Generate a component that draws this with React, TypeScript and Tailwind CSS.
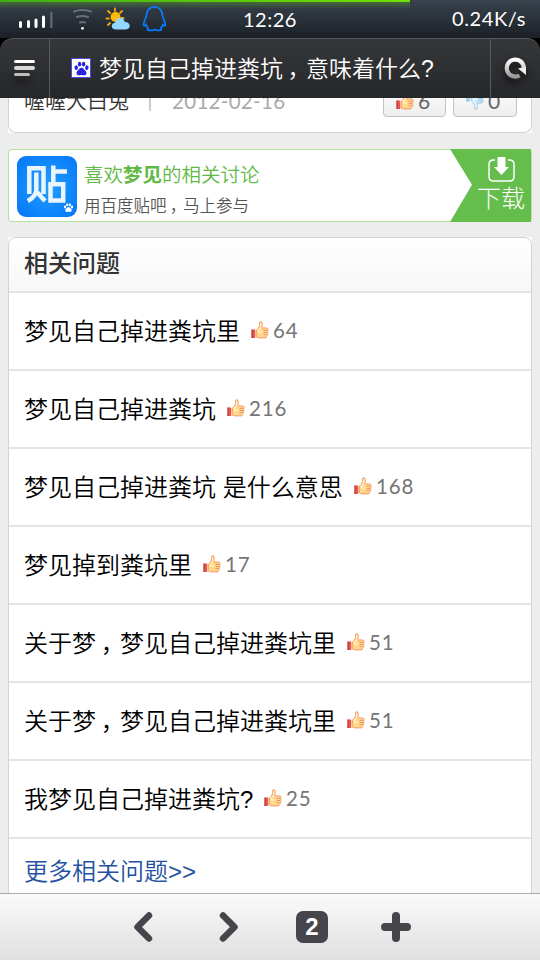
import React from 'react';

const questions = [
  { text: '梦见自己掉进粪坑里', votes: 64, width: 'w-[216px]' },
  { text: '梦见自己掉进粪坑', votes: 216, width: 'w-[192px]' },
  { text: '梦见自己掉进粪坑 是什么意思', votes: 168, width: 'w-[319px]' },
  { text: '梦见掉到粪坑里', votes: 17, width: 'w-[168px]' },
  { text: '关于梦，梦见自己掉进粪坑里', votes: 51, width: 'w-[312px]' },
  { text: '关于梦，梦见自己掉进粪坑里', votes: 51, width: 'w-[312px]' },
  { text: '我梦见自己掉进粪坑?', votes: 25, width: 'w-[229px]' },
];

// Sets full-width commas in the middle of their cell.
function Phrase({ text }: { text: string }) {
  return (
    <>
      {text.split('，').map((part, i) => (
        <React.Fragment key={i}>
          {i > 0 && <span className="inline-block translate-x-[.2em]">，</span>}
          {part}
        </React.Fragment>
      ))}
    </>
  );
}

function Thumb({ down = false }: { down?: boolean }) {
  const fill = down ? '#c9e6f7' : '#ffd98a';
  const edge = down ? '#8fc0e4' : '#f0865a';
  return (
    <svg width="18" height="18" viewBox="0 0 18 18" className={down ? 'shrink-0 -scale-y-100' : 'shrink-0'}>
      <path d="M.5 8.500h3.500v8.500H.5z" fill={down ? '#a9d3ee' : '#e2574f'} />
      <path d="M.5 8.500h1.200v8.500H.5z" fill={down ? '#8ebfe0' : '#c23a3a'} />
      <path d="M4 8.800h1.200v7.700H4z" fill={down ? '#e6f5fd' : '#ffc9ac'} />
      <path
        d="M5.300 9.200 7.500 7 8.600 4.500V1.700c.2-1.500 2-1.400 2.400.1.400 1.600.2 3.600-.4 5.100h5c1.700.1 1.800 1.700.9 2.300.9.600.8 1.700 0 2.200.7.700.5 1.800-.3 2.100.4.900 0 1.600-.7 1.900 0 1-.6 1.500-1.500 1.500H7.600L5.300 16z"
        fill={fill}
        stroke={edge}
        strokeWidth=".8"
      />
      <path d="M6.800 10 9.600 6.800V2.300M7 11h4" stroke={down ? '#edf9ff' : '#fff0c4'} strokeWidth="1.300" fill="none" />
      <path d="M12.500 9.300h3.500M12.700 11.500h3.300M12.500 13.600h3" stroke={edge} strokeWidth=".9" />
    </svg>
  );
}

function Paw({ className }: { className?: string }) {
  return (
    <svg viewBox="0 0 20 20" className={className} fill="currentColor">
      <ellipse cx="3.800" cy="9" rx="2" ry="2.700" transform="rotate(-12 3.800 9)" />
      <ellipse cx="7.700" cy="4.900" rx="2" ry="2.800" />
      <ellipse cx="12.500" cy="4.900" rx="2" ry="2.800" />
      <ellipse cx="16.300" cy="9" rx="2" ry="2.700" transform="rotate(12 16.300 9)" />
      <path d="M10 9c2 0 2.500 1.600 4 3 3 2.500 2 5.800-.6 6-1.400.1-2-.4-3.400-.4s-2 .5-3.400.4C4 17.800 3 14.500 6 12c1.500-1.400 2-3 4-3z" />
    </svg>
  );
}

function StatusBar() {
  return (
    <div className="relative flex h-[38px] shrink-0 items-center bg-linear-to-b from-[#39434d] to-[#1b2026] [font-family:Lato,sans-serif] text-[20px] text-white">
      <div className="absolute top-0 left-0 h-[9px] w-[410px] bg-linear-to-b from-[#55ab1c]/50 to-transparent" />
      <div className="absolute top-0 left-0 h-[2px] w-[410px] bg-linear-to-r from-[#3fae12] to-[#72df00]" />
      <svg className="absolute top-0 left-0" width="180" height="38" viewBox="0 0 180 38" fill="none">
        <path d="M20.500 22.500v4M28.500 21.500v5M36 20v6.500M43.500 17v9.500" stroke="#fff" strokeWidth="3" strokeLinecap="round" />
        <path d="M51.300 12v16" stroke="#5d646d" strokeWidth="2.500" />
        <g stroke="#68717a" strokeWidth="2" strokeLinecap="round">
          <path d="M74 11.500q8.500-3 17 0M77 17q5.500-2 11 0M80 22.500q2.500-1 5 0" />
        </g>
        <circle cx="82.500" cy="28.300" r="1.400" fill="#fff" />
        <g stroke="#f6a800" strokeWidth="1.800" strokeLinecap="round">
          <path d="M115 8.500v2.500M108 11l2 2M106.500 18.500h2.200M108 25l2-2M122 11l-2 2M121.500 18h2" />
        </g>
        <circle cx="115.500" cy="17" r="5" fill="#ffba0b" />
        <path d="M116 29.500c-5.500 0-5.500-6.500-.8-6.700 1-7 9-6.500 9.500-.7 6.500-.3 6.500 7.400 1.300 7.400z" fill="#91d9ff" />
        <path
          d="M154.500 6.800c-5 0-8 4-8 8.500 0 2.200-2.900 6-2.900 9.200 0 1.700 1 2 2.300.1.600 1.500 1.200 2.600 2.300 3.500-1.600 1.500-.7 2.200 1 2.200h3c1.600 0 1.500-1 2.300-1s.7 1 2.300 1h3c1.700 0 2.500-1 .9-2.200 1.200-1 1.800-2 2.300-3.500 1.300 1.900 2.300 1.600 2.300-.1 0-3.200-2.900-7-2.900-9.200 0-4.500-2.900-8.500-7.900-8.500z"
          stroke="#087cff"
          strokeWidth="1.700"
        />
      </svg>
      <span className="ml-[243px] w-[60px] leading-[38px] tracking-[.5px]">12:26</span>
      <span className="mr-[14px] ml-auto pb-[3px] tracking-[.6px]">0.24K/s</span>
    </div>
  );
}

function TitleBar() {
  return (
    <div className="h-[60px] shrink-0 bg-black">
      <div className="flex h-full rounded-t-[13px] border-t border-[#55565a] bg-linear-to-b from-[#363739] to-[#26272a] text-white">
        <div className="flex w-[50px] flex-col gap-[3px] border-r border-[#58595c] pt-[21px] pl-[14px]">
          <i className="h-[3px] w-[21px] rounded-full bg-white shadow-md" />
          <i className="h-[4px] w-[21px] rounded-full bg-[#d8d8d8] shadow-md" />
          <i className="h-[3px] w-[16px] rounded-full bg-[#bcbcbc] shadow-[0_6px_6px_#111]" />
        </div>
        <div className="flex w-[441px] items-center border-r border-[#58595c] pl-[21px]">
          <span className="-mt-px flex size-[20px] items-center justify-center border border-[#5149e5] bg-white text-[#2825d8]">
            <Paw className="size-[17px]" />
          </span>
          <span className="ml-[8px] text-[23px] leading-[30px] font-[350] whitespace-nowrap">
            <Phrase text="梦见自己掉进粪坑，意味着什么?" />
          </span>
        </div>
        <div className="flex flex-1 items-center pl-[13px]">
          <svg width="24" height="28" viewBox="0 0 24 28" fill="none" className="drop-shadow-[0_5px_3px_#111]">
            <defs>
              <linearGradient id="reload" x1="0" y1="0" x2="0" y2="1">
                <stop stopColor="#fff" />
                <stop offset="1" stopColor="#999" />
              </linearGradient>
            </defs>
            <path d="M15.500 20.500A8.500 8.500 0 1 1 19.800 12.500" stroke="url(#reload)" strokeWidth="4.200" />
            <path d="M14 13.500l8-2v8.500z" fill="#eee" />
          </svg>
        </div>
      </div>
    </div>
  );
}

function Vote({ down = false, count, className }: { down?: boolean; count: number; className: string }) {
  return (
    <div className={`flex h-[38px] items-center rounded-[4px] border border-[#c2c2c2] bg-linear-to-b from-white to-[#eee] pt-[5px] pl-[12px] [font-family:Lato,sans-serif] text-[21px] text-[#666] ${className}`}>
      <Thumb down={down} />
      <span className="ml-[4px]">{count}</span>
    </div>
  );
}

function AnswerFooter() {
  return (
    <div className="bg-linear-to-r from-white from-50% to-[#f9f9f9]">
      <div className="flex h-[54px] items-start rounded-b-[8px] border border-t-0 border-[#d3d3d3] bg-white pl-[15px] text-[21px]">
        <span className="mt-[7px] leading-[30px] font-[350] text-[#333]">喔喔大白兔</span>
        <i className="mt-[14px] ml-[20px] h-[18px] w-[2px] bg-[#ccc]" />
        <span className="mt-[7px] ml-[21px] w-[211px] [font-family:Lato,sans-serif] text-[20.500px] leading-[30px] tracking-[.3px] text-[#aaa]">2012-02-16</span>
        <Vote count={6} className="w-[63px]" />
        <Vote down count={0} className="ml-[7px] w-[64px]" />
      </div>
    </div>
  );
}

function AppBanner() {
  return (
    <div className="mt-[16px] flex h-[73px] rounded-[4px] border border-[#b4df9c] bg-white pl-[8px]">
      <div className="relative mt-[6px] flex h-[61px] w-[60px] items-center justify-center overflow-hidden rounded-[9px] bg-radial from-[#229fff] to-[#0775f8]">
        <svg width="60" height="61" viewBox="0 0 60 61" fill="none" stroke="#eaf4fb" strokeWidth="4.500">
          <path d="M12.300 38V12.300h14.200V38M19.300 16.500V34q0 6-8.500 11M20.500 36.500l7.500 8.500M36.300 9.500V28M36.300 15.500H50M33.500 28.300h12.700v16.200H33.500z" />
        </svg>
        <Paw className="absolute right-[3px] bottom-[4px] size-[11px] text-white" />
      </div>
      <div className="ml-[7px] flex flex-col">
        <span className="mt-[11px] text-[19.500px] leading-[28px] font-[350] text-[#62b944]">
          喜欢<b className="font-bold">梦见</b>的相关讨论
        </span>
        <span className="mt-[5px] text-[16.500px] leading-[24px] font-[350] text-[#555]">
          <Phrase text="用百度贴吧，马上参与" />
        </span>
      </div>
      <div className="-my-px ml-auto flex h-[73px] w-[81px] flex-col items-center bg-[#65bd4b] pt-[7px] pl-[21px] text-white [clip-path:polygon(0_0,100%_0,100%_100%,0_100%,22px_49%)]">
        <svg width="27" height="26" viewBox="0 0 27 26" fill="none">
          <path d="M7 4H5.500Q1 4 1 8.500v12Q1 25 5.500 25h16q4.500 0 4.500-4.500v-12Q26 4 21.500 4H20" stroke="white" strokeWidth="1.500" />
          <path d="M9.500 1h8v10H21l-7.500 8L6 11h3.500z" fill="white" />
        </svg>
        <span className="mt-[3px] text-[24px] leading-[28px] font-light">下载</span>
      </div>
    </div>
  );
}

function RelatedQuestions() {
  return (
    <div className="mt-[15px] h-[720px] bg-[#f9f9f9]">
      <div className="h-full rounded-t-[8px] border border-[#d3d3d3] bg-white">
        <h2 className="h-[55px] rounded-t-[8px] border-b-2 border-[#e4e4e4] bg-linear-to-b from-white to-[#f7f7f7] pt-[8px] pl-[15px] text-[24px] leading-[36px] font-medium text-[#333]">相关问题</h2>
        {questions.map((q, i) => (
          <div key={i} className="flex h-[78px] items-center border-b-2 border-[#e4e4e4] pl-[15px]">
            <span className={`pt-[2px] text-[24px] leading-[36px] font-[350] whitespace-nowrap text-black ${q.width}`}>
              <Phrase text={q.text} />
            </span>
            <span className="mb-[2px] ml-[11px] flex items-center">
              <Thumb />
              <span className="ml-[4px] [font-family:Lato,sans-serif] text-[20.500px] leading-[28px] tracking-[.8px] text-[#757575]">{q.votes}</span>
            </span>
          </div>
        ))}
        <div className="pt-[15px] pl-[15px] text-[24px] leading-[36px] font-[350] text-[#2451a0]">更多相关问题&gt;&gt;</div>
      </div>
    </div>
  );
}

function BottomBar() {
  return (
    <div className="flex h-[67px] shrink-0 items-center border-t border-[#aaa] bg-linear-to-b from-[#fafafa] to-[#e0e0e0] pl-[132px] text-[#45464b]">
      <svg width="22" height="32" viewBox="0 0 22 32" fill="none" stroke="currentColor" strokeWidth="6.500" strokeLinecap="round" strokeLinejoin="round">
        <path d="M17 4.500 5.500 16 17 27.500" />
      </svg>
      <svg className="ml-[64px]" width="22" height="32" viewBox="0 0 22 32" fill="none" stroke="currentColor" strokeWidth="6.500" strokeLinecap="round" strokeLinejoin="round">
        <path d="M5 4.500 16.500 16 5 27.500" />
      </svg>
      <span className="ml-[56px] flex size-[32px] items-center justify-center rounded-[7px] bg-[#45464b] text-[24px] leading-none font-bold text-white">2</span>
      <svg className="ml-[52px]" width="32" height="32" viewBox="0 0 32 32" stroke="currentColor" strokeWidth="8" strokeLinecap="round">
        <path d="M16 5v22M5 16h22" />
      </svg>
    </div>
  );
}

export default function App() {
  return (
    <div className="flex h-[960px] w-[540px] flex-col overflow-hidden bg-[#ededed] [font-family:'Liberation_Sans','Noto_Sans_CJK_SC',sans-serif]">
      <StatusBar />
      <TitleBar />
      <main className="h-[795px] shrink-0 overflow-hidden px-[8px]">
        <div className="-mt-[19px]">
          <AnswerFooter />
          <AppBanner />
          <RelatedQuestions />
        </div>
      </main>
      <BottomBar />
    </div>
  );
}
